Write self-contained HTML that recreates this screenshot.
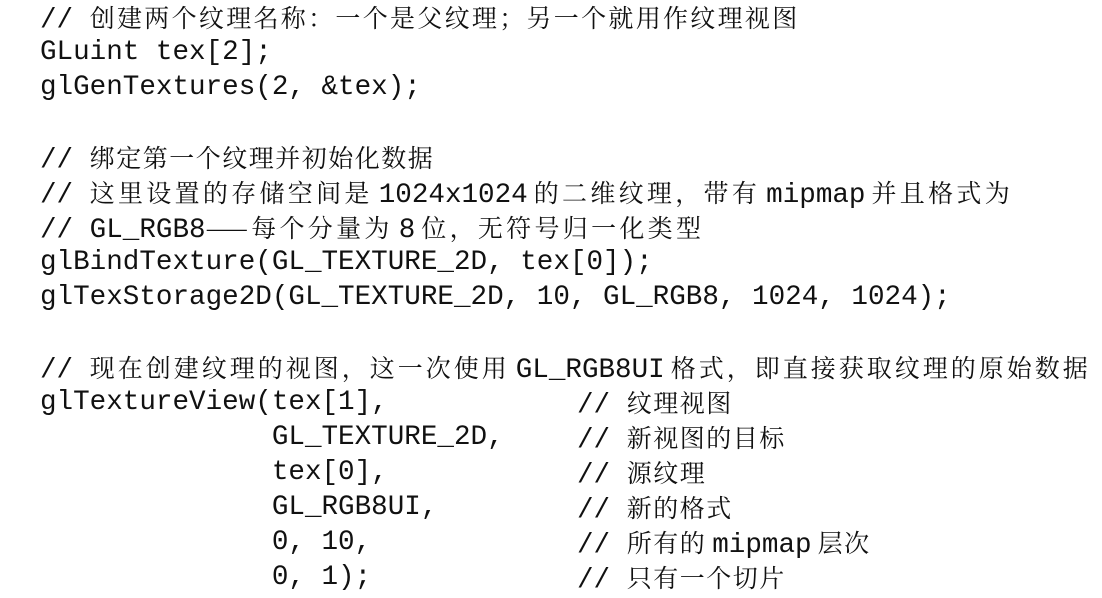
<!DOCTYPE html>
<html><head><meta charset="utf-8"><style>
body{margin:0;width:1102px;height:596px;background:#fff;overflow:hidden;position:relative;color:#111}
.l{position:absolute;left:40px;height:35px;line-height:35px;white-space:pre;font-family:"Liberation Mono",monospace;font-size:27.6px}
.c{font-family:"Noto Serif CJK SC","Noto Sans CJK SC",serif;font-size:25px;letter-spacing:1.5px}
.w .c{letter-spacing:3.3px}
.s{margin:0 6px}
</style></head><body>
<div class="l" style="top:0px">// <span class="c" style="letter-spacing:2.3px">创建两个纹理名称：一个是父纹理；另一个就用作纹理视图</span></div>
<div class="l" style="top:35px">GLuint tex[2];</div>
<div class="l" style="top:70px">glGenTextures(2, &amp;tex);</div>
<div class="l" style="top:140px">// <span class="c">绑定第一个纹理并初始化数据</span></div>
<div class="l w" style="top:175px">// <span class="c">这里设置的存储空间是</span><span class="s">1024x1024</span><span class="c">的二维纹理，带有</span><span class="s">mipmap</span><span class="c">并且格式为</span></div>
<div class="l w" style="top:210px">// GL_RGB8<span class="c">——每个分量为</span><span class="s">8</span><span class="c">位，无符号归一化类型</span></div>
<div class="l" style="top:245px">glBindTexture(GL_TEXTURE_2D, tex[0]);</div>
<div class="l" style="top:280px">glTexStorage2D(GL_TEXTURE_2D, 10, GL_RGB8, 1024, 1024);</div>
<div class="l" style="top:350px">// <span class="c" style="letter-spacing:3px">现在创建纹理的视图，这一次使用</span><span class="s">GL_RGB8UI</span><span class="c" style="letter-spacing:3px">格式，即直接获取纹理的原始数据</span></div>
<div class="l" style="top:385px">glTextureView(tex[1],</div>
<div class="l" style="top:420px">              GL_TEXTURE_2D,</div>
<div class="l" style="top:455px">              tex[0],</div>
<div class="l" style="top:490px">              GL_RGB8UI,</div>
<div class="l" style="top:525px">              0, 10,</div>
<div class="l" style="top:560px">              0, 1);</div>
<div class="l" style="top:385px;left:577px">// <span class="c">纹理视图</span></div>
<div class="l" style="top:420px;left:577px">// <span class="c">新视图的目标</span></div>
<div class="l" style="top:455px;left:577px">// <span class="c">源纹理</span></div>
<div class="l" style="top:490px;left:577px">// <span class="c">新的格式</span></div>
<div class="l" style="top:525px;left:577px">// <span class="c">所有的</span><span class="s">mipmap</span><span class="c">层次</span></div>
<div class="l" style="top:560px;left:577px">// <span class="c">只有一个切片</span></div>
</body></html>
